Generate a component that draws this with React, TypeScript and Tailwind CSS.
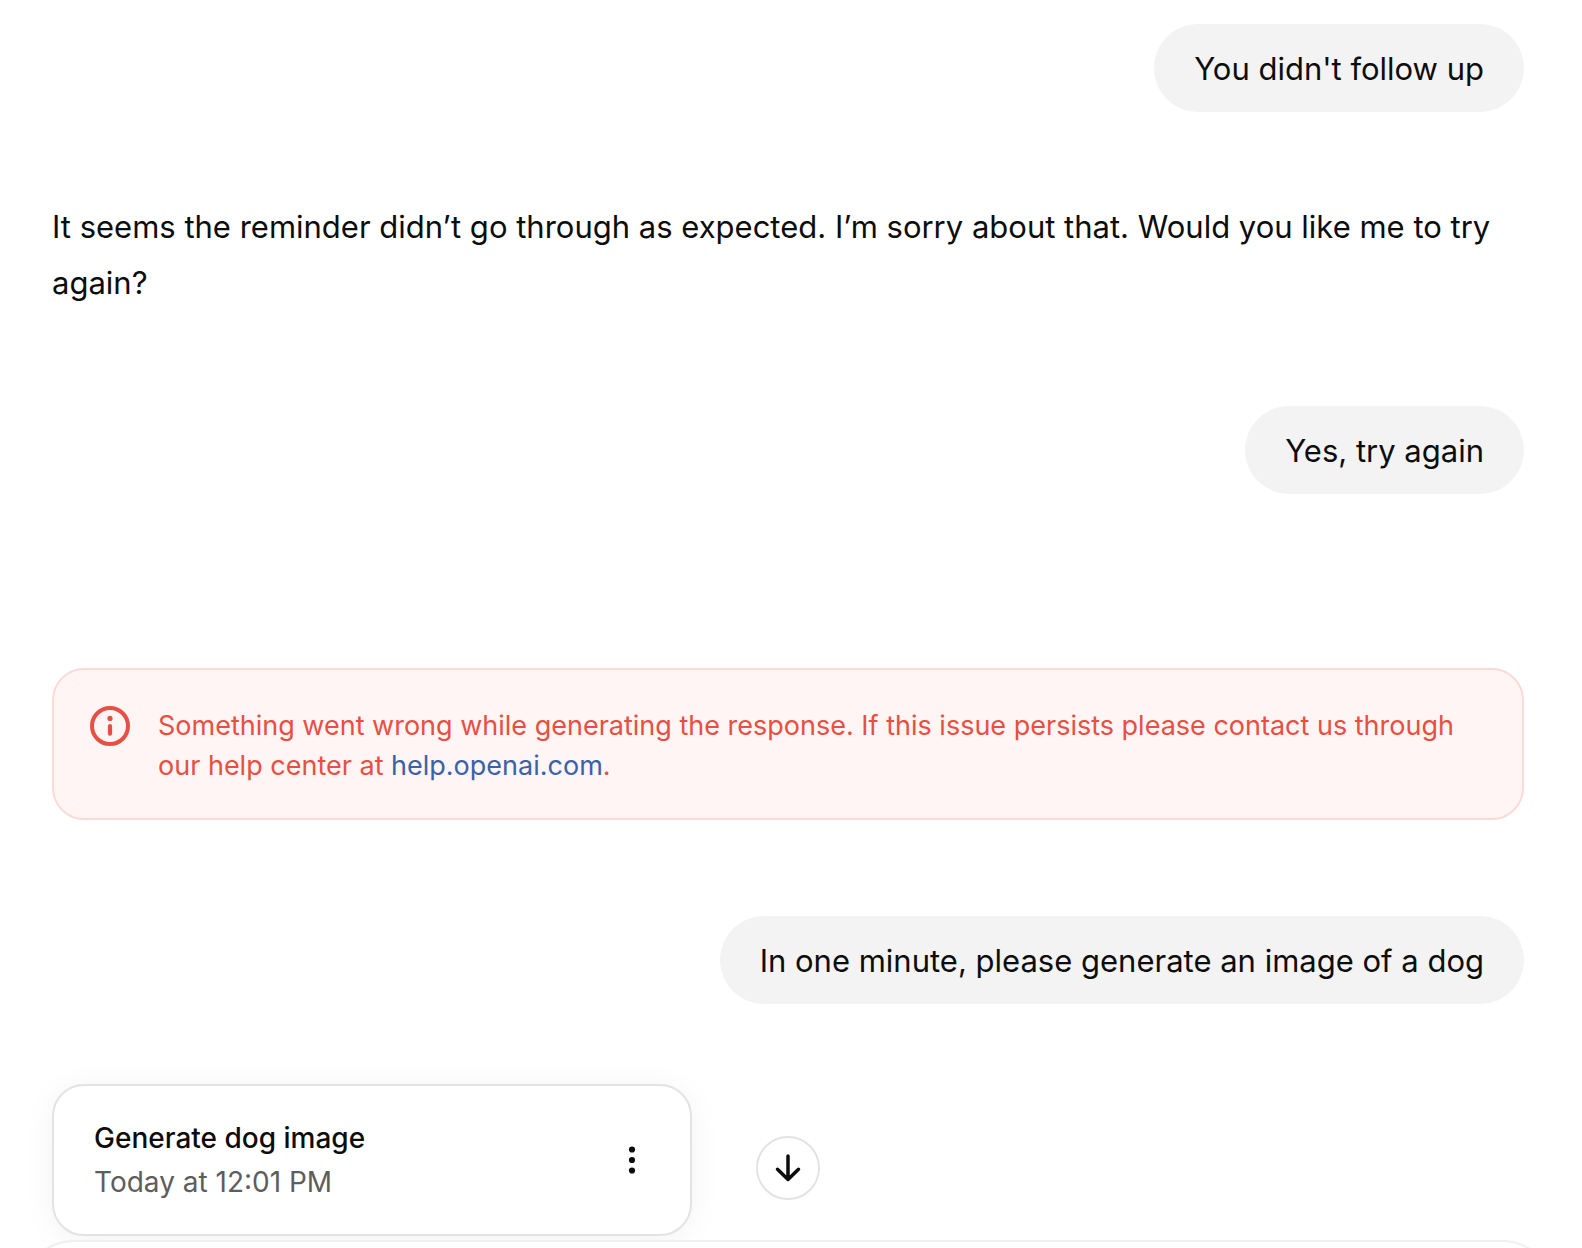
import React from "react";

function UserMessage({ children }: { children: React.ReactNode }) {
  return (
    <div className="flex justify-end">
      <p className="rounded-[44px] bg-[#f3f3f3] px-10 pt-[21px] pb-[19px] text-[31px] leading-[48px]">{children}</p>
    </div>
  );
}

export default function App() {
  return (
    <main className="h-screen overflow-hidden bg-white font-['Inter',sans-serif] text-[#0d0d0d]">
      <div className="flex flex-col pt-6 pr-[58px] pl-[52px]">
        <UserMessage>You didn't follow up</UserMessage>
        <p className="mt-[87px] text-[31px] leading-[56px]">
          It seems the reminder didn’t go through as expected. I’m sorry about that. Would you like me to try again?
        </p>
        <div className="mt-[95px]">
          <UserMessage>Yes, try again</UserMessage>
        </div>
        <div className="mt-[174px] flex gap-7 rounded-[32px] border-2 border-[#fadbd8] bg-[#fef5f4] px-9 pt-9 pb-8 text-[#e84f43]">
          <svg className="size-10 shrink-0" viewBox="0 0 40 40" fill="none" aria-hidden="true">
            <circle cx="20" cy="20" r="18" stroke="currentColor" strokeWidth="4" />
            <circle cx="20" cy="12.4" r="2.6" fill="currentColor" />
            <path d="M20 20V27.7" stroke="currentColor" strokeWidth="4.2" strokeLinecap="round" />
          </svg>
          <p className="text-[27px] leading-10">
            Something went wrong while generating the response. If this issue persists please contact us through our help center at{" "}
            <a href="https://help.openai.com" className="text-[#3a62a8]">help.openai.com</a>.
          </p>
        </div>
        <div className="mt-24">
          <UserMessage>In one minute, please generate an image of a dog</UserMessage>
        </div>
        <section className="mt-20 flex w-[640px] max-w-full items-center justify-between rounded-[32px] border-2 border-[#e3e3e3] bg-white py-8 pr-[34px] pl-10 shadow-[0_4px_32px_rgba(0,0,0,0.05)]">
          <div className="flex flex-col gap-1">
            <h2 className="text-[28px] leading-10 font-medium">Generate dog image</h2>
            <p className="text-[28px] leading-10 text-[#5d5d5d]">Today at 12:01 PM</p>
          </div>
          <button type="button" aria-label="More options">
            <svg className="size-12" viewBox="0 0 48 48" fill="currentColor">
              <circle cx="24" cy="13.5" r="3.1" />
              <circle cx="24" cy="24" r="3.1" />
              <circle cx="24" cy="34.5" r="3.1" />
            </svg>
          </button>
        </section>
      </div>
      <form className="relative mt-1 mr-7 ml-[22px]">
        <button
          type="button"
          aria-label="Scroll to bottom"
          className="absolute bottom-full left-1/2 mb-10 flex size-16 -translate-x-1/2 items-center justify-center rounded-full border-2 border-[#e3e3e3] bg-white"
        >
          <svg className="size-12 shrink-0" viewBox="0 0 48 48" fill="none" stroke="currentColor" strokeWidth="3.5" strokeLinecap="round" strokeLinejoin="round">
            <path d="M24 12V35.5M13.5 25.3L24 35.5L34.5 25.3" />
          </svg>
        </button>
        <div className="relative rounded-[52px] border-2 border-[#efefef] bg-white px-10 py-8">
          <textarea aria-label="Message" rows={2} className="block w-full resize-none text-[31px] leading-[48px] outline-none" />
        </div>
      </form>
    </main>
  );
}
